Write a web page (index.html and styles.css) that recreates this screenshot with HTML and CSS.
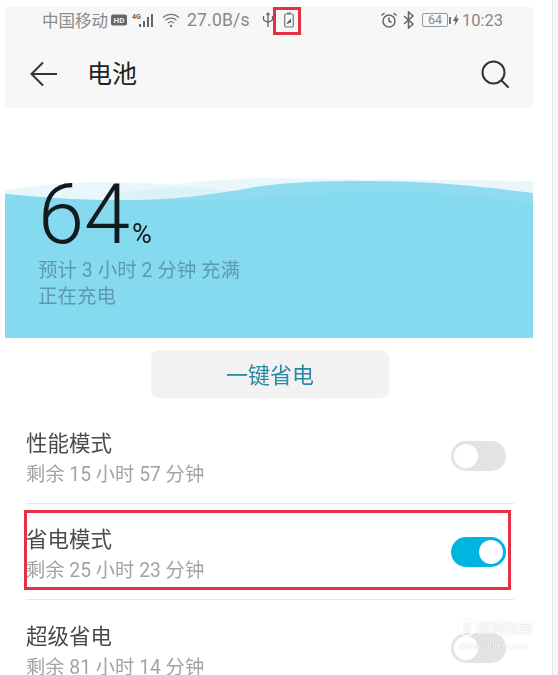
FILE: index.html
```html
<!DOCTYPE html>
<html lang="zh-CN">
<head>
<meta charset="utf-8">
<title>电池</title>
<link rel="stylesheet" href="styles.css">
</head>
<body>
<div class="page">
  <main class="phone">
    <header class="top">
      <div class="status">
        <div class="status-group left">
          <span class="carrier">中国移动</span>
          <svg class="hd" width="16" height="12" viewBox="0 0 16 12"><rect width="16" height="11" y="0.500" rx="2" fill="#666"/><text x="8" y="9" text-anchor="middle" class="hd-text">HD</text></svg>
          <svg class="signal" width="24" height="16" viewBox="0 0 24 16"><text x="0" y="7" class="tiny">4G</text><g fill="#666"><rect x="7" y="12" width="2" height="3"/><rect x="11" y="9" width="2" height="6"/><rect x="15" y="5" width="2" height="10"/><rect x="19" y="2" width="2" height="13"/></g></svg>
          <svg class="wifi" width="18" height="16" viewBox="0 0 18 16" fill="none" stroke="#777" stroke-width="1.300"><path d="M1 5.500c4.500-4.300 11.500-4.300 16 0"/><path d="M3.500 8.200c3-2.800 8-2.800 11 0"/><path d="M6 11c1.700-1.500 4.300-1.500 6 0"/><circle cx="9" cy="14" r="1.200" fill="#777" stroke="none"/></svg>
          <span class="speed">27.0B/s</span>
          <svg class="usb" width="12" height="16" viewBox="0 0 12 16" fill="none" stroke="#666" stroke-width="1.300"><path d="M6 1v14"/><path d="M1.500 4v3q0 2 4.500 3q4.500-1 4.500-3V4"/><path d="M4.500 3L6 1l1.500 2"/></svg>
          <svg class="batt-saver" width="10" height="16" viewBox="0 0 10 16"><rect x="0.700" y="2" width="8.600" height="13" rx="1.500" fill="none" stroke="#777" stroke-width="1.200"/><rect x="3" y="0.500" width="4" height="1.500" fill="#777"/><path d="M2.800 11L7 6.500v3.800L3 12z" fill="#555"/></svg>
        </div>
        <div class="status-group right">
          <svg class="alarm" width="18" height="18" viewBox="0 0 18 18" fill="none" stroke="#666" stroke-width="1.500"><circle cx="9" cy="10" r="6"/><path d="M9 6.500V10l2.500 1.500"/><path d="M1.500 4.500L4.500 2M16.500 4.500L13.500 2"/></svg>
          <svg class="bt" width="12" height="18" viewBox="0 0 12 18" fill="none" stroke="#666" stroke-width="1.500"><path d="M1 5l9 8-4.500 4V1L10 5l-9 8"/></svg>
          <div class="battery"><span class="battery-level">64</span></div>
          <span class="battery-cap"></span>
          <svg class="bolt" width="6" height="12" viewBox="0 0 6 12"><path d="M4 0L0 7h2.500L1.500 12 6 4.500H3.500z" fill="#666"/></svg>
          <span class="clock">10:23</span>
        </div>
      </div>
      <div class="appbar">
        <div class="appbar-left">
          <svg class="back" width="28" height="26" viewBox="0 0 28 26" fill="none" stroke="#333" stroke-width="2"><path d="M27 13H2M13 1.500L1.500 13 13 24.500"/></svg>
          <h1 class="title">电池</h1>
        </div>
        <svg class="search" width="30" height="30" viewBox="0 0 30 30" fill="none" stroke="#333" stroke-width="2"><circle cx="13.500" cy="13.500" r="11"/><path d="M21.500 21.500L28 28" stroke-linecap="round"/></svg>
      </div>
    </header>

    <section class="hero">
      <svg class="waves" width="528" height="160" viewBox="0 0 528 160">
        <path d="M0 12C30 8 65 4 95 4C120 4 145 5 165 7C190 3 225 1 255 0L528 3V30H0z" fill="#eaf7fa"/>
        <path d="M100 17C135 11 165 9 190 9C215 10 240 15 260 20V30H100z" fill="#dcf2f7"/>
        <path d="M0 16C40 20 90 23 125 22C165 22 200 18 250 9C290 3 330 3 365 3C430 3 480 9 528 15V160H0z" fill="#8fdcf0"/>
        <path d="M0 16C40 20 90 23 125 22C175 22 230 23 290 18C330 14 370 13 395 13C440 14 490 21 528 25V160H0z" fill="#86daef"/>
      </svg>
      <div class="reading">
        <span class="percent">64</span><span class="percent-sign">%</span>
      </div>
      <p class="hero-line">预计 3 小时 2 分钟 充满</p>
      <p class="hero-line">正在充电</p>
    </section>

    <div class="action">
      <button class="save-button" type="button">一键省电</button>
    </div>

    <ul class="modes">
      <li class="mode">
        <div class="mode-text">
          <div class="mode-name">性能模式</div>
          <div class="mode-left">剩余 15 小时 57 分钟</div>
        </div>
        <span class="toggle"><span class="knob"></span></span>
      </li>
      <li class="mode">
        <div class="mode-text">
          <div class="mode-name">省电模式</div>
          <div class="mode-left">剩余 25 小时 23 分钟</div>
        </div>
        <span class="toggle is-on"><span class="knob"></span></span>
      </li>
      <li class="mode">
        <div class="mode-text">
          <div class="mode-name">超级省电</div>
          <div class="mode-left">剩余 81 小时 14 分钟</div>
        </div>
        <span class="toggle"><span class="knob"></span></span>
      </li>
    </ul>

    <div class="mark mark-battery"></div>
    <div class="mark mark-mode"></div>
    <div class="watermark">
      <div class="wm-top"><span class="wm-logo">S</span><span class="wm-name">搜狗指南</span></div>
      <div class="wm-url">zhinan.sogou.com</div>
    </div>
  </main>
  <aside class="rail"></aside>
</div>
</body>
</html>
```

FILE: styles.css
```css
* { box-sizing: border-box; }
html, body { margin: 0; padding: 0; background: #fff; }
body {
  font-family: "Roboto", "Noto Sans CJK SC", sans-serif;
  overflow: hidden;
  height: 675px;
}
.page {
  display: flex;
  width: 558px;
  height: 675px;
  padding: 7px 0 0 5px;
  filter: blur(0.45px);
}
.phone {
  position: relative;
  width: 528px;
  flex: none;
  height: 668px;
  overflow: hidden;
}
.rail {
  width: 6px;
  height: 675px;
  margin: -7px 0 0 19px;
  background: #f7f7f7;
  border-left: 1px solid #e6e6e6;
  flex: none;
}

/* header */
.top {
  background: #f7f7f7;
  height: 101px;
  border-radius: 3px 3px 0 0;
}
.status {
  display: flex;
  justify-content: space-between;
  align-items: center;
  height: 26px;
  padding: 0 30px 0 37px;
  color: #888;
  font-size: 17px;
}
.status-group { display: flex; align-items: center; }
.carrier { font-size: 16.500px; color: #8a8a8a; }
.hd { margin-left: 3px; }
.hd-text { font-size: 8px; font-weight: 700; fill: #eee; }
.signal { margin-left: 5px; }
.tiny { font-size: 7px; font-weight: 700; fill: #666; }
.wifi { margin-left: 6px; }
.speed { margin-left: 7px; font-size: 17.500px; letter-spacing: 0.200px; }
.usb { margin-left: 12px; }
.batt-saver { margin-left: 10px; }
.alarm { margin-left: 0; }
.bt { margin-left: 5px; }
.battery {
  margin-left: 7px;
  width: 26px;
  height: 14px;
  border: 1px solid #999;
  border-radius: 2px;
  display: flex;
  align-items: center;
  justify-content: center;
}
.battery-level { font-size: 12.500px; line-height: 12px; color: #888; }
.battery-cap { width: 2px; height: 7px; background: #777; margin-left: 1px; }
.bolt { margin-left: 2px; }
.clock { margin-left: 3px; font-size: 16.500px; }
.appbar {
  display: flex;
  justify-content: space-between;
  align-items: center;
  height: 56px;
  padding: 0 23px 0 25px;
  margin-top: 13px;
}
.appbar-left { display: flex; align-items: center; }
.back { flex: none; }
.title {
  margin: 1px 0 0 29px;
  font-size: 25px;
  font-weight: 400;
  color: #222;
  line-height: 30px;
}
.search { flex: none; }

/* hero */
.hero {
  position: relative;
  height: 160px;
  margin-top: 70px;
  padding: 0 0 0 33px;
}
.waves { position: absolute; left: 0; top: 0; }
.reading {
  position: relative;
  display: flex;
  align-items: baseline;
  height: 78px;
  line-height: 74px;
  color: #111a1d;
  margin-bottom: 4px;
}
.percent { font-size: 83px; font-weight: 300; }
.percent-sign { font-size: 27px; font-weight: 400; margin-left: 2px; }
.hero-line {
  position: relative;
  margin: 0;
  font-size: 19.500px;
  line-height: 26px;
  color: #5c9bad;
}
.reading + .hero-line { margin-top: -2px; }

/* button */
.action { display: flex; justify-content: center; margin-top: 12px; }
.save-button {
  width: 238px;
  height: 48px;
  border: 0;
  border-radius: 8px;
  background: #f2f2f2;
  color: #2a8aa6;
  font-family: inherit;
  font-size: 22px;
  font-weight: 400;
  margin-left: 2px;
  padding: 0 0 3px;
}

/* modes */
.modes { list-style: none; margin: 10px 0 0; padding: 0 19px 0 21px; }
.mode {
  display: flex;
  justify-content: space-between;
  align-items: center;
  height: 96px;
  border-bottom: 1px solid #e6e6e6;
  padding: 0 8px 0 0;
}
.mode:last-child { border-bottom: 0; }
.mode-text { margin-top: 6px; }
.mode-name { font-size: 21.500px; line-height: 30px; color: #4a4a4a; }
.mode-left { font-size: 19.300px; line-height: 26px; margin-top: 3px; color: #a3a3a3; }
.toggle {
  display: flex;
  align-items: center;
  justify-content: flex-start;
  width: 55px;
  height: 30px;
  padding: 3px;
  border-radius: 15px;
  background: #e3e3e3;
}
.toggle.is-on { background: #00b5e0; justify-content: flex-end; }
.knob { width: 24px; height: 24px; border-radius: 50%; background: #fff; }

/* annotations */
.mark { position: absolute; border: 3px solid #e5303f; }
.mark-battery { left: 268px; top: 0; width: 28px; height: 28px; }
.mark-mode { left: 19px; top: 503px; width: 487px; height: 80px; }
.watermark {
  position: absolute;
  left: 453px;
  top: 612px;
  width: 75px;
  color: rgba(255,255,255,0.85);
  text-shadow: 0 0 2px rgba(0,0,0,0.18);
}
.wm-top { display: flex; align-items: center; }
.wm-logo {
  flex: none;
  width: 18px;
  height: 18px;
  border: 2px solid rgba(255,255,255,0.85);
  box-shadow: 0 0 2px rgba(0,0,0,0.15);
  border-radius: 50%;
  font-size: 13px;
  line-height: 14px;
  font-weight: 700;
  text-align: center;
}
.wm-name { font-size: 14px; line-height: 18px; margin-left: 1px; white-space: nowrap; }
.wm-url { font-size: 8.500px; line-height: 12px; margin-top: 3px; white-space: nowrap; }
```
